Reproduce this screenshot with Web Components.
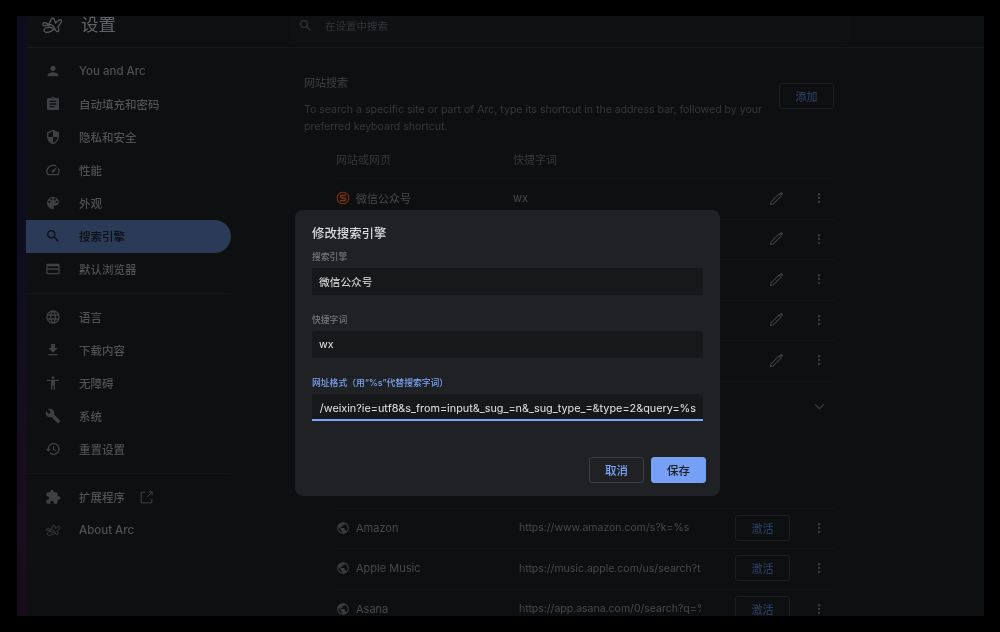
<!DOCTYPE html>
<html lang="zh">
<head>
<meta charset="utf-8">
<title>设置</title>
<style>
html, body { margin: 0; height: 100%; background: #000; overflow: hidden; }
body { font-family: Inter, "Noto Sans CJK SC", sans-serif; }
</style>
</head>
<body>
<settings-page>
    <settings-header slot="header"></settings-header>
    <settings-sidebar slot="sidebar">
        <nav-item icon="person" label="You and Arc"></nav-item>
        <nav-item icon="assignment" label="自动填充和密码"></nav-item>
        <nav-item icon="security" label="隐私和安全"></nav-item>
        <nav-item icon="speed" label="性能"></nav-item>
        <nav-item icon="palette" label="外观"></nav-item>
        <nav-item icon="search" label="搜索引擎" active></nav-item>
        <nav-item icon="browser" label="默认浏览器"></nav-item>
        <nav-divider></nav-divider>
        <nav-item icon="language" label="语言"></nav-item>
        <nav-item icon="download" label="下载内容"></nav-item>
        <nav-item icon="accessibility" label="无障碍"></nav-item>
        <nav-item icon="build" label="系统"></nav-item>
        <nav-item icon="restore" label="重置设置"></nav-item>
        <nav-divider></nav-divider>
        <nav-item icon="extension" label="扩展程序" external></nav-item>
        <nav-item icon="arc" label="About Arc"></nav-item>
    </settings-sidebar>
    <site-search slot="content"></site-search>
    <edit-dialog slot="dialog"></edit-dialog>
</settings-page>

<script>
const ICONS = {
    person: '<path d="M12 12c2.21 0 4-1.79 4-4s-1.79-4-4-4-4 1.79-4 4 1.79 4 4 4zm0 2c-2.67 0-8 1.34-8 4v2h16v-2c0-2.66-5.33-4-8-4z"/>',
    assignment: '<path d="M19 3h-4.18C14.4 1.84 13.3 1 12 1c-1.3 0-2.4.84-2.82 2H5c-1.1 0-2 .9-2 2v14c0 1.1.9 2 2 2h14c1.1 0 2-.9 2-2V5c0-1.1-.9-2-2-2zm-7 0c.55 0 1 .45 1 1s-.45 1-1 1-1-.45-1-1 .45-1 1-1zm2 14H7v-2h7v2zm3-4H7v-2h10v2zm0-4H7V7h10v2z"/>',
    security: '<path d="M12 1L3 5v6c0 5.55 3.84 10.74 9 12 5.16-1.26 9-6.45 9-12V5l-9-4zm0 10.99h7c-.53 4.12-3.28 7.79-7 8.94V12H5V6.3l7-3.11v8.8z"/>',
    speed: '<path d="M20.38 8.57l-1.23 1.85a8 8 0 0 1-.22 7.58H5.07A8 8 0 0 1 15.58 6.85l1.85-1.23A10 10 0 0 0 3.35 19a2 2 0 0 0 1.72 1h13.85a2 2 0 0 0 1.74-1 10 10 0 0 0-.27-10.44zm-9.79 6.84a2 2 0 0 0 2.83 0l5.66-8.49-8.49 5.66a2 2 0 0 0 0 2.83z"/>',
    palette: '<path d="M12 3c-4.97 0-9 4.03-9 9s4.03 9 9 9c.83 0 1.5-.67 1.5-1.5 0-.39-.15-.74-.39-1.01-.23-.26-.38-.61-.38-.99 0-.83.67-1.5 1.5-1.5H16c2.76 0 5-2.24 5-5 0-4.42-4.03-8-9-8zm-5.5 9c-.83 0-1.5-.67-1.5-1.5S5.67 9 6.5 9 8 9.67 8 10.5 7.33 12 6.5 12zm3-4C8.67 8 8 7.33 8 6.5S8.67 5 9.5 5s1.5.67 1.5 1.5S10.33 8 9.5 8zm5 0c-.83 0-1.5-.67-1.5-1.5S13.67 5 14.5 5s1.5.67 1.5 1.5S15.33 8 14.5 8zm3 4c-.83 0-1.5-.67-1.5-1.5S16.67 9 17.5 9s1.5.67 1.5 1.5-.67 1.5-1.5 1.5z"/>',
    search: '<path d="M15.5 14h-.79l-.28-.27C15.41 12.59 16 11.11 16 9.5 16 5.91 13.09 3 9.5 3S3 5.91 3 9.5 5.91 16 9.5 16c1.61 0 3.09-.59 4.23-1.57l.27.28v.79l5 4.99L20.49 19l-4.99-5zm-6 0C7.01 14 5 11.99 5 9.5S7.01 5 9.5 5 14 7.01 14 9.5 11.99 14 9.5 14z"/>',
    browser: '<path d="M20 4H4c-1.1 0-2 .9-2 2v12c0 1.1.9 2 2 2h16c1.1 0 2-.9 2-2V6c0-1.1-.9-2-2-2zm0 14H4v-5h16v5zm0-7H4V8h16v3z"/>',
    language: '<path d="M11.99 2C6.47 2 2 6.48 2 12s4.47 10 9.99 10C17.52 22 22 17.52 22 12S17.52 2 11.99 2zm6.93 6h-2.95c-.32-1.25-.78-2.45-1.38-3.56 1.84.63 3.37 1.91 4.33 3.56zM12 4.04c.83 1.2 1.48 2.53 1.91 3.96h-3.82c.43-1.43 1.08-2.76 1.91-3.96zM4.26 14C4.1 13.36 4 12.69 4 12s.1-1.36.26-2h3.38c-.08.66-.14 1.32-.14 2 0 .68.06 1.34.14 2H4.26zm.82 2h2.95c.32 1.25.78 2.45 1.38 3.56-1.84-.63-3.37-1.9-4.33-3.56zm2.95-8H5.08c.96-1.66 2.49-2.93 4.33-3.56C8.81 5.55 8.35 6.75 8.03 8zM12 19.96c-.83-1.2-1.48-2.53-1.91-3.96h3.82c-.43 1.43-1.08 2.76-1.91 3.96zM14.34 14H9.66c-.09-.66-.16-1.32-.16-2 0-.68.07-1.35.16-2h4.68c.09.65.16 1.32.16 2 0 .68-.07 1.34-.16 2zm.25 5.56c.6-1.11 1.06-2.31 1.38-3.56h2.95c-.96 1.65-2.49 2.93-4.33 3.56zM16.36 14c.08-.66.14-1.32.14-2 0-.68-.06-1.34-.14-2h3.38c.16.64.26 1.31.26 2s-.1 1.36-.26 2h-3.38z"/>',
    download: '<path d="M19 9h-4V3H9v6H5l7 7 7-7zM5 18v2h14v-2H5z"/>',
    accessibility: '<path d="M12 2c1.1 0 2 .9 2 2s-.9 2-2 2-2-.9-2-2 .9-2 2-2zm9 7h-6v13h-2v-6h-2v6H9V9H3V7h18v2z"/>',
    build: '<path d="M22.7 19l-9.1-9.1c.9-2.3.4-5-1.5-6.9-2-2-5-2.4-7.4-1.3L9 6 6 9 1.6 4.7C.4 7.1.9 10.1 2.9 12.1c1.9 1.9 4.6 2.4 6.9 1.5l9.1 9.1c.4.4 1 .4 1.4 0l2.3-2.3c.5-.4.5-1.1.1-1.4z"/>',
    restore: '<path d="M13 3c-4.97 0-9 4.03-9 9H1l3.89 3.89.07.14L9 12H6c0-3.87 3.13-7 7-7s7 3.13 7 7-3.13 7-7 7c-1.93 0-3.68-.79-4.94-2.06l-1.42 1.42C8.27 19.99 10.51 21 13 21c4.97 0 9-4.03 9-9s-4.03-9-9-9zm-1 5v5l4.28 2.54.72-1.21-3.5-2.08V8H12z"/>',
    extension: '<path d="M20.5 11H19V7c0-1.1-.9-2-2-2h-4V3.5C13 2.12 11.88 1 10.5 1S8 2.12 8 3.5V5H4c-1.1 0-1.99.9-1.99 2v3.8H3.5c1.49 0 2.7 1.21 2.7 2.7s-1.21 2.7-2.7 2.7H2V20c0 1.1.9 2 2 2h3.8v-1.5c0-1.49 1.21-2.7 2.7-2.7 1.49 0 2.7 1.21 2.7 2.7V22H17c1.1 0 2-.9 2-2v-4h1.5c1.38 0 2.5-1.12 2.5-2.5S21.88 11 20.5 11z"/>',
    arc: '<path fill="none" stroke="currentColor" stroke-width="1.4" stroke-linejoin="round" stroke-linecap="round" d="M2.5 12.500C5 13 7.500 12.500 9 10.500L11.500 5.500C12.300 4 14 4.500 14.500 6L16 10C17.500 8.500 19 6.500 20.500 6.200 22.500 6 22.800 8 21.800 9.500L18.500 14 19.500 17C20 19 17.500 20 16.500 18.500L13.500 13.500C12 11.500 9.500 11 8.500 12.500M15 16C12.500 18 9 20.500 5.500 20 2.500 19.500 2.500 16 5.500 15 8 14.200 11 14.500 13 15.500M2.500 12.500C1.500 11 2.500 9.500 4 9.500 6 9.500 7 10.500 8 11.500"/>',
    pencil: '<path fill="none" stroke="currentColor" stroke-width="1.500" stroke-linejoin="round" d="M3.500 20.500l.8-3.800L15.500 5.500l3 3L7.300 19.700z"/><path d="M16.500 4.500l1.500-1.500c.5-.5 1-.5 1.500 0l1.500 1.500c.5.5.5 1 0 1.500l-1.500 1.500z"/>',
    more: '<circle cx="12" cy="5.500" r="2"/><circle cx="12" cy="12" r="2"/><circle cx="12" cy="18.500" r="2"/>',
    globe: '<path d="M12 2C6.48 2 2 6.48 2 12s4.48 10 10 10 10-4.48 10-10S17.52 2 12 2zm-1 17.93c-3.95-.49-7-3.85-7-7.93 0-.62.08-1.21.21-1.79L9 15v1c0 1.1.9 2 2 2v1.93zm6.9-2.54c-.26-.81-1-1.39-1.9-1.39h-1v-3c0-.55-.45-1-1-1H8v-2h2c.55 0 1-.45 1-1V7h2c1.1 0 2-.9 2-2v-.41c2.93 1.19 5 4.06 5 7.41 0 2.08-.8 3.97-2.1 5.39z"/>',
    external: '<path fill="none" stroke="currentColor" stroke-width="1.600" d="M10 3.500H3.500v17h17V14M13 11l8-8M15.500 3H21v5.500"/>',
    chevron: '<path fill="none" stroke="currentColor" stroke-width="1.800" d="M5 8.500l7 7 7-7"/>',
    sogou: '<circle cx="12" cy="12" r="10" fill="none" stroke="currentColor" stroke-width="1.800"/><path fill="none" stroke="currentColor" stroke-width="2.600" d="M17 7.500H10c-3 0-3 4.500 0 4.500h4.500c3 0 3 4.500 0 4.500H7"/>',
};

function svgIcon(name, size) {
    return `<svg width="${size}" height="${size}" viewBox="0 0 24 24" fill="currentColor" aria-hidden="true">${ICONS[name]}</svg>`;
}

class SettingsPage extends HTMLElement {
    constructor() {
        super();
        this.attachShadow({ mode: "open" });
        this.shadowRoot.innerHTML = `
            <style>
                :host {
                    display: block;
                    width: 1000px;
                    height: 632px;
                    padding: 16px 16px 16px 17px;
                    box-sizing: border-box;
                    font-family: Inter, "Noto Sans CJK SC", sans-serif;
                }
                .window {
                    position: relative;
                    display: grid;
                    grid-template-columns: 9px 1fr;
                    height: 100%;
                    overflow: hidden;
                    background: #0e0f10;
                }
                .strip {
                    background: linear-gradient(#0c0c1c, #0f0e20 45%, #1b0b1e 85%, #180a1a);
                }
                .app {
                    display: grid;
                    grid-template-rows: 32px 1fr;
                    min-height: 0;
                    overflow: hidden;
                    filter: blur(0.35px);
                }
                .body {
                    display: grid;
                    grid-template-columns: 205px 1fr;
                    min-height: 0;
                    overflow: hidden;
                }
                ::slotted([slot="dialog"]) {
                    position: absolute;
                    left: 278px;
                    top: 194px;
                }
            </style>
            <div class="window">
                <div class="strip"></div>
                <div class="app">
                    <slot name="header"></slot>
                    <div class="body">
                        <slot name="sidebar"></slot>
                        <slot name="content"></slot>
                    </div>
                </div>
                <slot name="dialog"></slot>
            </div>
        `;
    }
}

class SettingsHeader extends HTMLElement {
    constructor() {
        super();
        this.attachShadow({ mode: "open" });
        this.shadowRoot.innerHTML = `
            <style>
                :host {
                    display: grid;
                    grid-template-columns: 264px 560px;
                    align-items: start;
                    border-bottom: 1px solid #17181a;
                    box-sizing: border-box;
                    height: 32px;
                }
                .brand {
                    display: flex;
                    align-items: center;
                    gap: 18px;
                    padding-left: 15px;
                    height: 18px;
                    color: #56585b;
                }
                .brand span {
                    font-size: 17.500px;
                    line-height: 18px;
                    color: #5f6164;
                }
                .search {
                    display: flex;
                    align-items: center;
                    gap: 12px;
                    padding: 0 0 8px 8px;
                    height: 18px;
                    background: #101112;
                    border-radius: 0 0 6px 6px;
                    color: #33353a;
                    font-size: 10.500px;
                }
                svg { flex: none; }
            </style>
            <div class="brand">${svgIcon("arc", 22)}<span>设置</span></div>
            <div class="search">${svgIcon("search", 15)}<span>在设置中搜索</span></div>
        `;
    }
}

class SettingsSidebar extends HTMLElement {
    constructor() {
        super();
        this.attachShadow({ mode: "open" });
        this.shadowRoot.innerHTML = `
            <style>
                :host {
                    display: block;
                    padding-top: 7px;
                }
            </style>
            <slot></slot>
        `;
    }
}

class NavItem extends HTMLElement {
    constructor() {
        super();
        this.attachShadow({ mode: "open" });
    }

    connectedCallback() {
        const active = this.hasAttribute("active");
        const tail = this.hasAttribute("external")
            ? `<span class="ext">${svgIcon("external", 15)}</span>`
            : "";
        this.shadowRoot.innerHTML = `
            <style>
                :host {
                    display: flex;
                    align-items: center;
                    height: 33px;
                    box-sizing: border-box;
                    padding-bottom: 1px;
                    color: ${active ? "#0d0f12" : "#4f5154"};
                    ${active ? "background: #2a3a57; border-radius: 0 17px 17px 0;" : ""}
                    font-size: 11.500px;
                    font-weight: 500;
                }
                .icon {
                    display: flex;
                    width: 53px;
                    padding-left: 19px;
                    box-sizing: border-box;
                    color: ${active ? "#0d0f12" : "#3e4043"};
                }
                .ext {
                    display: flex;
                    margin-left: 14px;
                    color: #3e4043;
                }
            </style>
            <span class="icon">${svgIcon(this.getAttribute("icon"), 16)}</span>
            <span>${this.getAttribute("label")}</span>
            ${tail}
        `;
    }
}

class NavDivider extends HTMLElement {
    constructor() {
        super();
        this.attachShadow({ mode: "open" }).innerHTML = `
            <style>
                :host {
                    display: block;
                    height: 1px;
                    margin: 7px 0;
                    background: #141516;
                }
            </style>
        `;
    }
}

class TextButton extends HTMLElement {
    constructor() {
        super();
        this.attachShadow({ mode: "open" }).innerHTML = `
            <style>
                :host {
                    display: inline-flex;
                    align-items: center;
                    justify-content: center;
                    box-sizing: border-box;
                    width: 55px;
                    height: 26px;
                    border: 1px solid #1d1f22;
                    border-radius: 3px;
                    color: #2b3c5e;
                    font-size: 11px;
                    font-weight: 500;
                }
            </style>
            <slot></slot>
        `;
    }
}

class EngineRow extends HTMLElement {
    constructor() {
        super();
        this.attachShadow({ mode: "open" });
    }

    connectedCallback() {
        const url = this.getAttribute("url") || "";
        const name = this.getAttribute("name") || "";
        const key = this.getAttribute("key") || "";
        const icon = this.getAttribute("icon");
        const activatable = this.hasAttribute("activate");
        this.shadowRoot.innerHTML = `
            <style>
                :host {
                    display: grid;
                    grid-template-columns: ${activatable ? "183px 183px" : "177px 189px"} 1fr 14px;
                    align-items: center;
                    height: 40.500px;
                    box-sizing: border-box;
                    border-top: 1px solid #151617;
                    margin-left: 32px;
                    padding: 0 8px 1px 0;
                    font-size: 11px;
                    color: #47494c;
                }
                .name {
                    display: flex;
                    align-items: center;
                    gap: 6px;
                }
                .name svg { color: ${icon === "sogou" ? "#7a3312" : "#3a3c3f"}; }
                .val {
                    overflow: hidden;
                    white-space: nowrap;
                    margin-right: 1px;
                    font-size: ${activatable ? "10.500px" : "11px"};
                }
                .act {
                    display: flex;
                    justify-content: flex-end;
                    padding-right: ${activatable ? "22px" : "27px"};
                    color: #3d3f42;
                }
                .more {
                    display: flex;
                    color: #3d3f42;
                    justify-content: center;
                }
            </style>
            <div class="name">${icon ? svgIcon(icon, 14) : ""}<span>${name}</span></div>
            <div class="val">${url || key}</div>
            <div class="act">${activatable ? "<text-button>激活</text-button>" : svgIcon("pencil", 17)}</div>
            <div class="more">${svgIcon("more", 14)}</div>
        `;
    }
}

class SiteSearch extends HTMLElement {
    constructor() {
        super();
        this.attachShadow({ mode: "open" });
        this.shadowRoot.innerHTML = `
            <style>
                :host {
                    display: block;
                    width: 530px;
                    margin-left: 73px;
                    padding-top: 27px;
                    font-size: 10.550px;
                    color: #36383b;
                }
                .top {
                    display: flex;
                    justify-content: space-between;
                    align-items: flex-start;
                    gap: 12px;
                }
                .top h2 {
                    margin: 0 0 11px;
                    font-size: 11px;
                    font-weight: 500;
                    line-height: 16px;
                }
                .top p {
                    margin: 0;
                    line-height: 16.500px;
                }
                text-button { flex: none; margin-top: 8px; }
                .heads {
                    display: grid;
                    grid-template-columns: 177px 1fr;
                    margin: 17px 0 0 32px;
                    height: 26px;
                    line-height: 16px;
                    font-size: 11px;
                }
                .chev {
                    display: flex;
                    justify-content: flex-end;
                    align-items: center;
                    height: 49px;
                    padding-right: 7px;
                    margin-bottom: 77px;
                    color: #3d3f42;
                    border-top: 1px solid #151617;
                }
            </style>
            <div class="top">
                <div>
                    <h2>网站搜索</h2>
                    <p>To search a specific site or part of Arc, type its shortcut in the address bar, followed by your preferred keyboard shortcut.</p>
                </div>
                <text-button>添加</text-button>
            </div>
            <div class="heads"><span>网站或网页</span><span>快捷字词</span></div>
            <engine-row icon="sogou" name="微信公众号" key="wx"></engine-row>
            <engine-row></engine-row>
            <engine-row></engine-row>
            <engine-row></engine-row>
            <engine-row></engine-row>
            <div class="chev">${svgIcon("chevron", 15)}</div>
            <engine-row activate icon="globe" name="Amazon" url="https://www.amazon.com/s?k=%s"></engine-row>
            <engine-row activate icon="globe" name="Apple Music" url="https://music.apple.com/us/search?term=%s"></engine-row>
            <engine-row activate icon="globe" name="Asana" url="https://app.asana.com/0/search?q=%s"></engine-row>
        `;
    }
}

class FormField extends HTMLElement {
    constructor() {
        super();
        this.attachShadow({ mode: "open" });
    }

    connectedCallback() {
        const focused = this.hasAttribute("focused");
        this.shadowRoot.innerHTML = `
            <style>
                :host {
                    display: block;
                    margin-bottom: 18px;
                }
                label {
                    display: block;
                    font-size: 8.800px;
                    font-weight: 500;
                    line-height: 14px;
                    margin-bottom: 4px;
                    color: ${focused ? "#79a3f2" : "#75777a"};
                }
                .box {
                    display: flex;
                    align-items: center;
                    height: 27px;
                    box-sizing: border-box;
                    padding: ${focused ? "2px" : "0"} 7px 0;
                    background: #17181a;
                    border-radius: 3px 3px 0 0;
                    ${focused ? "border-bottom: 2px solid #7aa5f7;" : ""}
                    color: #e3e4e6;
                    font-size: ${focused ? "10.850px" : "10.700px"};
                    white-space: nowrap;
                }
                .clip {
                    display: flex;
                    flex: 1;
                    min-width: 0;
                    overflow: hidden;
                    justify-content: ${focused ? "flex-end" : "flex-start"};
                }
                .clip span { flex: none; }
            </style>
            <label>${this.getAttribute("label")}</label>
            <div class="box"><div class="clip"><span>${this.getAttribute("value")}</span></div></div>
        `;
    }
}

class EditDialog extends HTMLElement {
    constructor() {
        super();
        this.attachShadow({ mode: "open" });
        this.shadowRoot.innerHTML = `
            <style>
                :host {
                    display: block;
                    box-sizing: border-box;
                    width: 425px;
                    height: 286px;
                    padding: 15px 17px 13px;
                    background: #202124;
                    border-radius: 8px;
                    filter: blur(0.25px);
                }
                h1 {
                    margin: 0 0 7px;
                    font-size: 12.400px;
                    font-weight: 500;
                    line-height: 18px;
                    color: #dadbdd;
                }
                .actions {
                    display: flex;
                    justify-content: flex-end;
                    gap: 7px;
                    margin: 36px -3px 0 0;
                }
                button {
                    width: 55px;
                    height: 26px;
                    box-sizing: border-box;
                    font: 500 11.500px Inter, "Noto Sans CJK SC", sans-serif;
                    border-radius: 3px;
                    border: 1px solid #3c3e42;
                    background: transparent;
                    color: #7aa5f7;
                    padding: 0;
                }
                button.primary {
                    background: #75a0f5;
                    border-color: #75a0f5;
                    color: #202124;
                }
            </style>
            <h1>修改搜索引擎</h1>
            <form-field label="搜索引擎" value="微信公众号"></form-field>
            <form-field label="快捷字词" value="wx"></form-field>
            <form-field focused label="网址格式（用“%s”代替搜索字词）" value="https://weixin.sogou.com/weixin?ie=utf8&amp;s_from=input&amp;_sug_=n&amp;_sug_type_=&amp;type=2&amp;query=%s"></form-field>
            <div class="actions">
                <button>取消</button>
                <button class="primary">保存</button>
            </div>
        `;
    }
}

customElements.define("settings-page", SettingsPage);
customElements.define("settings-header", SettingsHeader);
customElements.define("settings-sidebar", SettingsSidebar);
customElements.define("nav-item", NavItem);
customElements.define("nav-divider", NavDivider);
customElements.define("text-button", TextButton);
customElements.define("engine-row", EngineRow);
customElements.define("site-search", SiteSearch);
customElements.define("form-field", FormField);
customElements.define("edit-dialog", EditDialog);
</script>
</body>
</html>
